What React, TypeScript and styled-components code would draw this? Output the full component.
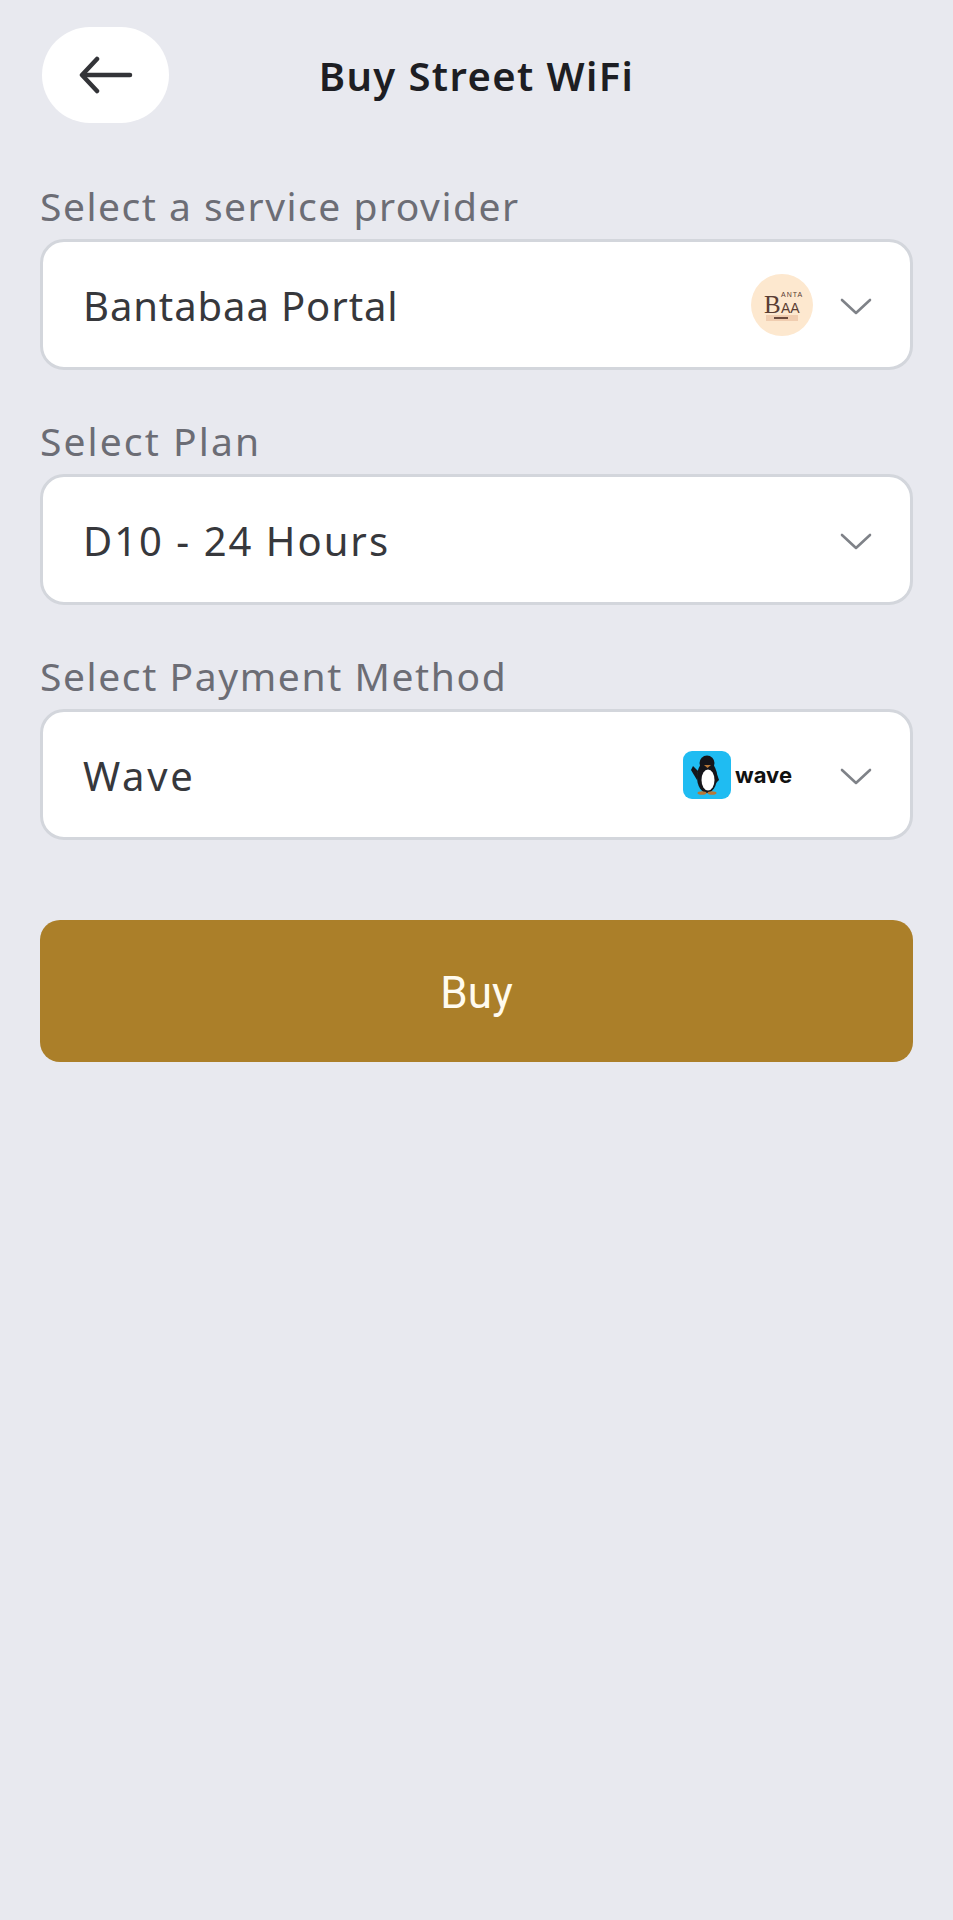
import styled, { createGlobalStyle } from "styled-components";

const GlobalStyle = createGlobalStyle`
  html, body {
    margin: 0;
    padding: 0;
    background-color: #e8e9ef;
  }
`;

const Arrow = () => (
  <svg width="54" height="40" viewBox="0 0 54 40" fill="none" stroke="#333438" strokeWidth="4.5" strokeLinecap="round" strokeLinejoin="round">
    <path d="M51 20H4" />
    <path d="M18 4L3 20l15 16" />
  </svg>
);

const Chevron = () => (
  <svg width="32" height="20" viewBox="0 0 32 20" fill="none" stroke="#7f8288" strokeWidth="2.6" strokeLinecap="round" strokeLinejoin="round">
    <path d="M2 3l14 13L30 3" />
  </svg>
);

const BantabaaLogo = () => (
  <LogoCircle>
    <svg width="46" height="44" viewBox="0 0 46 44">
      <rect x="7" y="32" width="32" height="6" fill="#f0cdb0" />
      <rect x="15" y="34" width="14" height="2" fill="#6b4a3c" />
      <text x="5" y="30" fontFamily="Liberation Serif, serif" fontSize="25" fill="#5a3d33">B</text>
      <text x="22" y="14" fontFamily="Liberation Sans, sans-serif" fontSize="7" letterSpacing="1" fill="#5a3d33">ANTA</text>
      <text x="22" y="30" fontFamily="Liberation Sans, sans-serif" fontSize="14" fill="#5a3d33">AA</text>
    </svg>
  </LogoCircle>
);

const WaveLogo = () => (
  <WaveRow>
    <svg width="48" height="48" viewBox="0 0 48 48">
      <rect width="48" height="48" rx="9" fill="#1fbcf2" />
      <ellipse cx="24" cy="26" rx="10" ry="16" fill="#15151a" />
      <circle cx="24" cy="12" r="7.500" fill="#15151a" />
      <path d="M15 20L10 15l-2 4 6 10z" fill="#15151a" />
      <path d="M33 20l3 9-3 3z" fill="#15151a" />
      <ellipse cx="25" cy="29" rx="6.500" ry="10.500" fill="#fff" />
      <path d="M21 14h7l-3.500 3z" fill="#b87838" />
      <ellipse cx="19" cy="42" rx="4.500" ry="1.800" fill="#b87838" />
      <ellipse cx="29" cy="42" rx="4.500" ry="1.800" fill="#b87838" />
    </svg>
    <WaveWord>wave</WaveWord>
  </WaveRow>
);

const fields = [
  { label: "Select a service provider", labelSpacing: 1.5, value: "Bantabaa Portal", valueSpacing: 0.9, logo: <BantabaaLogo /> },
  { label: "Select Plan", labelSpacing: 2.1, value: "D10 - 24 Hours", valueSpacing: 2, logo: null },
  { label: "Select Payment Method", labelSpacing: 1.6, value: "Wave", valueSpacing: 2.7, logo: <WaveLogo /> },
];

const App = () => {
  return (
    <Page>
      <GlobalStyle />
      <Header>
        <BackButton aria-label="Back">
          <Arrow />
        </BackButton>
        <Title>Buy Street WiFi</Title>
      </Header>
      <Form>
        {fields.map((field) => (
          <Field key={field.label}>
            <Label $spacing={field.labelSpacing}>{field.label}</Label>
            <SelectBox>
              <SelectValue $spacing={field.valueSpacing}>{field.value}</SelectValue>
              {field.logo}
              <ChevronSlot>
                <Chevron />
              </ChevronSlot>
            </SelectBox>
          </Field>
        ))}
      </Form>
      <BuyButton>Buy</BuyButton>
    </Page>
  );
};

export default App;

const Page = styled.div`
  box-sizing: border-box;
  width: 953px;
  height: 1920px;
  padding: 27px 40px 0;
  background-color: #e8e9ef;
  font-family: "Noto Sans", sans-serif;
  overflow: hidden;
`;

const Header = styled.div`
  position: relative;
  height: 96px;
  display: flex;
  align-items: center;
`;

const BackButton = styled.button`
  width: 127px;
  height: 96px;
  margin-left: 2px;
  padding: 0;
  border: none;
  border-radius: 48px;
  background-color: #ffffff;
  display: flex;
  align-items: center;
  justify-content: center;
`;

const Title = styled.h1`
  position: absolute;
  left: 0;
  right: 0;
  top: 24px;
  margin: 0;
  text-align: center;
  font-size: 40px;
  line-height: 50px;
  font-weight: 600;
  letter-spacing: 1.4px;
  color: #1d1e23;
`;

const Form = styled.div`
  margin-top: 58px;
  display: flex;
  flex-direction: column;
  gap: 46px;
`;

const Field = styled.div`
  display: flex;
  flex-direction: column;
  gap: 8px;
`;

const Label = styled.div<{ $spacing: number }>`
  font-size: 39px;
  line-height: 50px;
  letter-spacing: ${(p) => p.$spacing}px;
  color: #6c6d75;
`;

const SelectBox = styled.div`
  box-sizing: border-box;
  height: 131px;
  padding: 0 38px 0 40px;
  display: flex;
  align-items: center;
  background-color: #ffffff;
  border: 3px solid #d3d6dc;
  border-radius: 24px;
`;

const SelectValue = styled.div<{ $spacing: number }>`
  flex: 1;
  padding-top: 2px;
  font-size: 40px;
  line-height: 50px;
  letter-spacing: ${(p) => p.$spacing}px;
  color: #37383c;
`;

const ChevronSlot = styled.div`
  display: flex;
  margin-left: 27px;
  padding-top: 5px;
`;

const LogoCircle = styled.div`
  width: 62px;
  height: 62px;
  border-radius: 50%;
  background-color: #fde8cf;
  display: flex;
  align-items: center;
  justify-content: center;
`;

const WaveRow = styled.div`
  display: flex;
  align-items: center;
  gap: 4px;
  margin-right: 21px;
`;

const WaveWord = styled.span`
  font-family: Inter, sans-serif;
  font-size: 22px;
  font-weight: 700;
  color: #111;
`;

const BuyButton = styled.button`
  display: block;
  width: 100%;
  height: 142px;
  margin-top: 80px;
  padding-top: 4px;
  border: none;
  border-radius: 20px;
  background-color: #ab7f29;
  color: #fffbef;
  font-family: Roboto, sans-serif;
  font-size: 44px;
`;
